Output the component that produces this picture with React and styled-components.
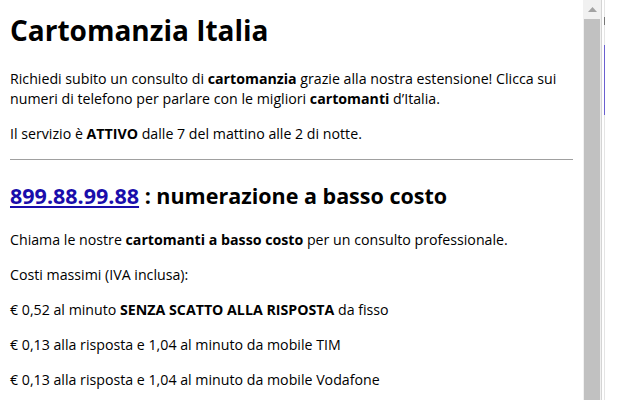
import styled, { createGlobalStyle } from "styled-components";

const GlobalStyle = createGlobalStyle`
  html, body {
    margin: 0;
    padding: 0;
    background: #ffffff;
    overflow: hidden;
  }
  body {
    font-family: "Open Sans", "Noto Sans", sans-serif;
    color: #000;
  }
`;

const tariffe = [
  { id: 1, testo: <>€ 0,52 al minuto <b>SENZA SCATTO ALLA RISPOSTA</b> da fisso</> },
  { id: 2, testo: <>€ 0,13 alla risposta e 1,04 al minuto da mobile TIM</> },
  { id: 3, testo: <>€ 0,13 alla risposta e 1,04 al minuto da mobile Vodafone</> },
];

export default function App() {
  return (
    <>
      <GlobalStyle />
      <Screen>
        <Popup>
          <Titolo>Cartomanzia Italia</Titolo>
          <Paragrafo>
            Richiedi subito un consulto di <b>cartomanzia</b> grazie alla nostra
            estensione! Clicca sui numeri di telefono per parlare con le migliori{" "}
            <b>cartomanti</b> d’Italia.
          </Paragrafo>
          <Paragrafo>
            Il servizio è <b>ATTIVO</b> dalle 7 del mattino alle 2 di notte.
          </Paragrafo>
          <Linea />
          <Sottotitolo>
            <Numero href="#">899.88.99.88</Numero> : numerazione a basso costo
          </Sottotitolo>
          <Paragrafo>
            Chiama le nostre <b>cartomanti a basso costo</b> per un consulto
            professionale.
          </Paragrafo>
          <Paragrafo>Costi massimi (IVA inclusa):</Paragrafo>
          {tariffe.map((t) => (
            <Paragrafo key={t.id}>{t.testo}</Paragrafo>
          ))}
        </Popup>
        <Scrollbar>
          <FrecciaSu>
            <svg width="9" height="5" viewBox="0 0 9 5">
              <path d="M0 5 L4.5 0 L9 5 Z" fill="#a3a3a3" />
            </svg>
          </FrecciaSu>
          <Cursore />
        </Scrollbar>
        <Bordo>
          <Segno>
            <Tacca $colore="#777" $alto={17} $altezza={8} />
            <Tacca $colore="#6a5fd0" $alto={20} $altezza={70} />
          </Segno>
        </Bordo>
      </Screen>
    </>
  );
}

const Screen = styled.div`
  display: flex;
  width: 640px;
  height: 400px;
  overflow: hidden;
`;

const Popup = styled.div`
  width: 563px;
  padding: 0 10px;
  flex-shrink: 0;
  overflow: hidden;
  font-size: 14.2px;
  line-height: 20px;
`;

const Titolo = styled.h1`
  font-size: 28px;
  font-weight: 700;
  line-height: 32px;
  margin: 14px 0 23px;
`;

const Paragrafo = styled.p`
  margin: 0 0 15px;
  b {
    font-weight: 700;
  }
`;

const Linea = styled.hr`
  border: none;
  border-top: 1px solid #a0a0a0;
  margin: 0 0 23px;
`;

const Sottotitolo = styled.h2`
  font-size: 21.5px;
  font-weight: 700;
  line-height: 26px;
  margin: 0 0 21px;
`;

const Numero = styled.a`
  color: #1a0dab;
  text-decoration: underline;
`;

const Scrollbar = styled.div`
  width: 18px;
  flex-shrink: 0;
  display: flex;
  flex-direction: column;
  background: #f1f1f1;
  border-right: 1px solid #d4d4d4;
`;

const FrecciaSu = styled.div`
  height: 19px;
  display: flex;
  align-items: center;
  justify-content: center;
`;

const Cursore = styled.div`
  flex: 1;
  margin: 0 1px;
  background: #c1c1c1;
`;

const Bordo = styled.div`
  flex: 1;
  padding-left: 2px;
`;

const Segno = styled.div`
  width: 1px;
  height: 100%;
  background: #e4e4e4;
  display: flex;
  flex-direction: column;
`;

const Tacca = styled.div`
  margin-top: ${(p) => p.$alto}px;
  height: ${(p) => p.$altezza}px;
  background: ${(p) => p.$colore};
`;
